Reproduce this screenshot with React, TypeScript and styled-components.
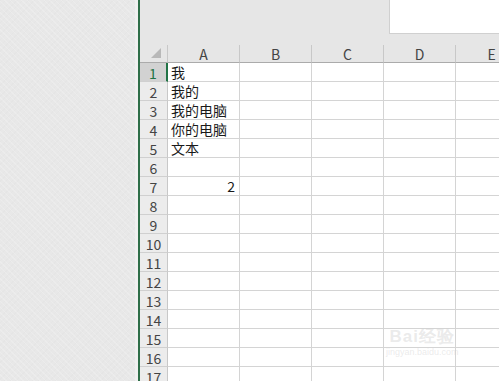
import styled, { createGlobalStyle } from 'styled-components';

const GlobalStyle = createGlobalStyle`
  html, body {
    margin: 0;
    padding: 0;
    overflow: hidden;
    background: #ffffff;
  }
  * {
    box-sizing: border-box;
  }
`;

const Screen = styled.div`
  display: flex;
  width: 499px;
  height: 381px;
  overflow: hidden;
  position: relative;
  font-family: 'Noto Sans CJK SC', 'Noto Sans', sans-serif;
`;

const Backdrop = styled.div`
  width: 138px;
  flex-shrink: 0;
  background-color: #e8e8e8;
  background-image:
    repeating-linear-gradient(45deg, rgba(255, 255, 255, 0.18) 0 1px, transparent 1px 4px),
    repeating-linear-gradient(-45deg, rgba(0, 0, 0, 0.012) 0 1px, transparent 1px 4px);
  border-right: 3px solid #f0f0f0;
`;

const Sheet = styled.div`
  flex: 1;
  display: flex;
  flex-direction: column;
  border-left: 2px solid #2e6e48;
  background: #e6e6e6;
  min-width: 0;
`;

const TopBar = styled.div`
  height: 45px;
  flex-shrink: 0;
  display: flex;
  justify-content: flex-end;
  align-items: flex-start;
`;

const FormulaBox = styled.div`
  width: 110px;
  height: 34px;
  background: #ffffff;
  border-left: 1px solid #d0d0d0;
  border-bottom: 1px solid #d0d0d0;
`;

const Grid = styled.div`
  display: grid;
  grid-template-columns: 28px repeat(5, 72px);
  grid-auto-rows: 19px;
  grid-template-rows: 18px;
  background: #ffffff;
`;

const Corner = styled.div`
  background: #e6e6e6;
  border-right: 1px solid #c8c8c8;
  border-bottom: 1px solid #ababab;
  position: relative;

  &::after {
    content: '';
    position: absolute;
    right: 6px;
    bottom: 4px;
    width: 0;
    height: 0;
    border-left: 10px solid transparent;
    border-bottom: 10px solid #b8b8b8;
  }
`;

const ColHead = styled.div`
  background: #e6e6e6;
  border-right: 1px solid #c8c8c8;
  border-bottom: 1px solid #ababab;
  display: flex;
  align-items: center;
  justify-content: center;
  font-size: 14px;
  color: #444444;
  line-height: 1;
  padding-top: 1px;
`;

const RowHead = styled.div<{ $active?: boolean }>`
  background: ${({ $active }) => ($active ? '#d2d2d2' : '#ececec')};
  border-right: ${({ $active }) => ($active ? '2px solid #217346' : '1px solid #c8c8c8')};
  border-bottom: 1px solid #d0d0d0;
  display: flex;
  align-items: center;
  justify-content: center;
  font-size: 14px;
  color: ${({ $active }) => ($active ? '#217346' : '#444444')};
  line-height: 1;
  padding-top: 1px;
`;

const Cell = styled.div<{ $align?: 'left' | 'right' }>`
  border-right: 1px solid #d4d4d4;
  border-bottom: 1px solid #d4d4d4;
  display: flex;
  align-items: center;
  justify-content: ${({ $align }) => ($align === 'right' ? 'flex-end' : 'flex-start')};
  padding: 0 4px 0 3px;
  font-size: 14px;
  color: #1a1a1a;
  white-space: nowrap;
  overflow: visible;
  line-height: 1;
`;

const Watermark = styled.div`
  position: absolute;
  left: 386px;
  top: 328px;
  display: flex;
  flex-direction: column;
  align-items: center;
  color: rgba(210, 210, 210, 0.45);
  pointer-events: none;
`;

const MarkTitle = styled.div`
  font-family: 'Liberation Sans', Arial, sans-serif;
  font-size: 17px;
  font-weight: 700;
  letter-spacing: 1px;
  line-height: 1;
`;

const MarkUrl = styled.div`
  font-family: 'Liberation Sans', Arial, sans-serif;
  font-size: 9px;
  line-height: 1;
  margin-top: 3px;
`;

const columns = ['A', 'B', 'C', 'D', 'E'];

const data: Record<number, { text: string; align?: 'left' | 'right' }> = {
  1: { text: '我' },
  2: { text: '我的' },
  3: { text: '我的电脑' },
  4: { text: '你的电脑' },
  5: { text: '文本' },
  7: { text: '2', align: 'right' },
};

export default function App() {
  const rows = Array.from({ length: 17 }, (_, i) => i + 1);
  return (
    <>
      <GlobalStyle />
      <Screen>
        <Backdrop />
        <Sheet>
          <TopBar>
            <FormulaBox />
          </TopBar>
          <Grid>
            <Corner />
            {columns.map((c) => (
              <ColHead key={c}>{c}</ColHead>
            ))}
            {rows.map((r) => (
              <Row key={r} index={r} />
            ))}
          </Grid>
        </Sheet>
        <Watermark>
          <MarkTitle>Bai经验</MarkTitle>
          <MarkUrl>jingyan.baidu.com</MarkUrl>
        </Watermark>
      </Screen>
    </>
  );
}

function Row({ index }: { index: number }) {
  const entry = data[index];
  return (
    <>
      <RowHead $active={index === 1}>{index}</RowHead>
      {columns.map((c) => (
        <Cell key={c} $align={c === 'A' ? entry?.align : undefined}>
          {c === 'A' && entry ? entry.text : null}
        </Cell>
      ))}
    </>
  );
}
